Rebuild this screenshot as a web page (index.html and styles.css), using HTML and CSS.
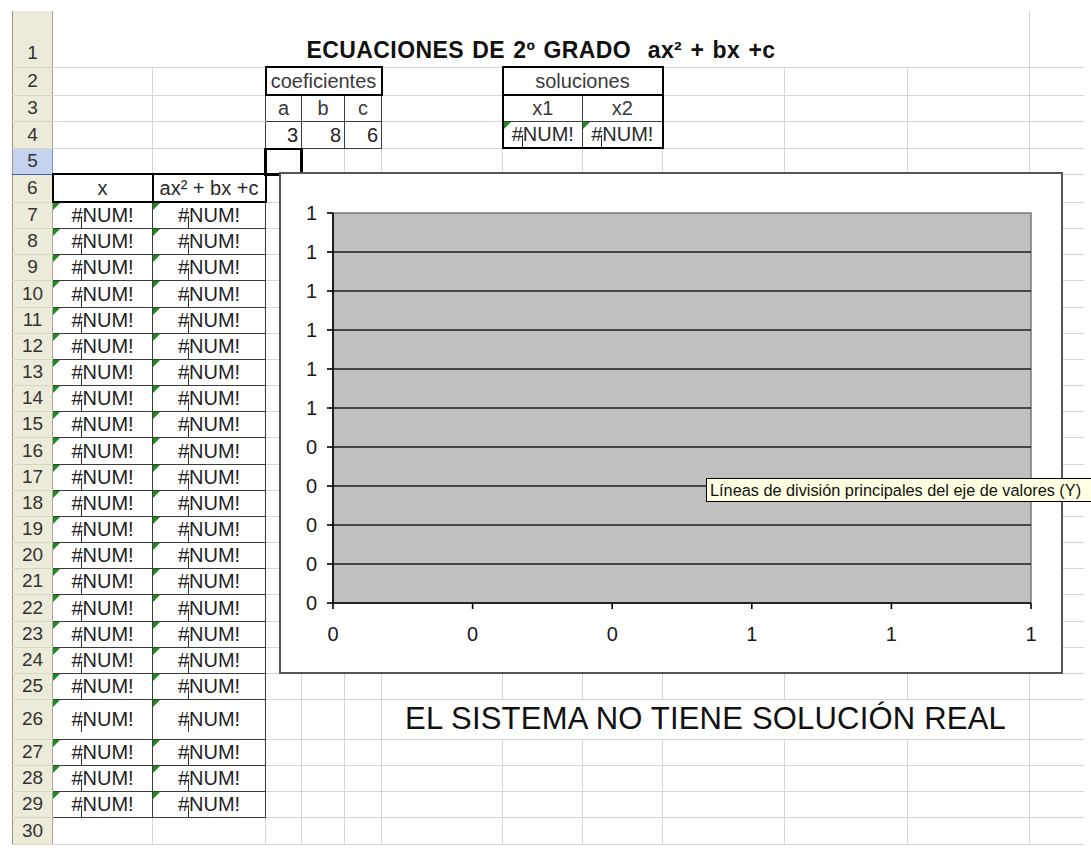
FILE: index.html
```html
<!DOCTYPE html>
<html lang="es">
<head>
<meta charset="utf-8">
<title>Ecuaciones de 2º grado</title>
<link rel="stylesheet" href="styles.css">
</head>
<body>
<div class="page">
<table class="sheet">
<colgroup>
<col class="c-hdr"><col class="c-a"><col class="c-b"><col class="c-c"><col class="c-d"><col class="c-e"><col class="c-f"><col class="c-g"><col class="c-h"><col class="c-i"><col class="c-j"><col class="c-k"><col class="c-l">
</colgroup>
<tbody>
<tr class="r1"><td class="rh">1</td><td colspan="11" class="title">ECUACIONES DE 2º GRADO&nbsp; ax² + bx +c</td><td></td></tr>
<tr class="h28"><td class="rh">2</td><td></td><td></td><td colspan="3" class="box2 ctr lbl">coeficientes</td><td></td><td colspan="2" class="box2 ctr lbl">soluciones</td><td></td><td></td><td></td><td></td></tr>
<tr><td class="rh">3</td><td></td><td class="rd"></td><td class="k ctr lbl">a</td><td class="k ctr lbl">b</td><td class="k ctr lbl">c</td><td></td><td class="k sl ctr lbl">x1</td><td class="k sr ctr lbl">x2</td><td></td><td></td><td></td><td></td></tr>
<tr class="h27"><td class="rh">4</td><td></td><td class="rd"></td><td class="k num">3</td><td class="k num">8</td><td class="k num">6</td><td></td><td class="k sl sb err ctr"><span class="h">#</span>NUM!</td><td class="k sr sb err ctr"><span class="h">#</span>NUM!</td><td></td><td></td><td></td><td></td></tr>
<tr><td class="rh sel">5</td><td></td><td></td><td class="selcell"><div class="selbox"></div></td><td></td><td></td><td></td><td></td><td></td><td></td><td></td><td></td><td></td></tr>
<tr class="h28"><td class="rh">6</td><td class="box2 ctr">x</td><td class="box2 ctr">ax² + bx +c</td><td></td><td></td><td></td><td></td><td></td><td></td><td></td><td></td><td></td><td></td></tr>
<tr><td class="rh">7</td><td class="d err"><span class="h">#</span>NUM!</td><td class="d err"><span class="h">#</span>NUM!</td><td></td><td></td><td></td><td></td><td></td><td></td><td></td><td></td><td></td><td></td></tr>
<tr><td class="rh">8</td><td class="d err"><span class="h">#</span>NUM!</td><td class="d err"><span class="h">#</span>NUM!</td><td></td><td></td><td></td><td></td><td></td><td></td><td></td><td></td><td></td><td></td></tr>
<tr><td class="rh">9</td><td class="d err"><span class="h">#</span>NUM!</td><td class="d err"><span class="h">#</span>NUM!</td><td></td><td></td><td></td><td></td><td></td><td></td><td></td><td></td><td></td><td></td></tr>
<tr class="h27"><td class="rh">10</td><td class="d err"><span class="h">#</span>NUM!</td><td class="d err"><span class="h">#</span>NUM!</td><td></td><td></td><td></td><td></td><td></td><td></td><td></td><td></td><td></td><td></td></tr>
<tr><td class="rh">11</td><td class="d err"><span class="h">#</span>NUM!</td><td class="d err"><span class="h">#</span>NUM!</td><td></td><td></td><td></td><td></td><td></td><td></td><td></td><td></td><td></td><td></td></tr>
<tr><td class="rh">12</td><td class="d err"><span class="h">#</span>NUM!</td><td class="d err"><span class="h">#</span>NUM!</td><td></td><td></td><td></td><td></td><td></td><td></td><td></td><td></td><td></td><td></td></tr>
<tr><td class="rh">13</td><td class="d err"><span class="h">#</span>NUM!</td><td class="d err"><span class="h">#</span>NUM!</td><td></td><td></td><td></td><td></td><td></td><td></td><td></td><td></td><td></td><td></td></tr>
<tr><td class="rh">14</td><td class="d err"><span class="h">#</span>NUM!</td><td class="d err"><span class="h">#</span>NUM!</td><td></td><td></td><td></td><td></td><td></td><td></td><td></td><td></td><td></td><td></td></tr>
<tr><td class="rh">15</td><td class="d err"><span class="h">#</span>NUM!</td><td class="d err"><span class="h">#</span>NUM!</td><td></td><td></td><td></td><td></td><td></td><td></td><td></td><td></td><td></td><td></td></tr>
<tr class="h27"><td class="rh">16</td><td class="d err"><span class="h">#</span>NUM!</td><td class="d err"><span class="h">#</span>NUM!</td><td></td><td></td><td></td><td></td><td></td><td></td><td></td><td></td><td></td><td></td></tr>
<tr><td class="rh">17</td><td class="d err"><span class="h">#</span>NUM!</td><td class="d err"><span class="h">#</span>NUM!</td><td></td><td></td><td></td><td></td><td></td><td></td><td></td><td></td><td></td><td></td></tr>
<tr><td class="rh">18</td><td class="d err"><span class="h">#</span>NUM!</td><td class="d err"><span class="h">#</span>NUM!</td><td></td><td></td><td></td><td></td><td></td><td></td><td></td><td></td><td></td><td></td></tr>
<tr><td class="rh">19</td><td class="d err"><span class="h">#</span>NUM!</td><td class="d err"><span class="h">#</span>NUM!</td><td></td><td></td><td></td><td></td><td></td><td></td><td></td><td></td><td></td><td></td></tr>
<tr><td class="rh">20</td><td class="d err"><span class="h">#</span>NUM!</td><td class="d err"><span class="h">#</span>NUM!</td><td></td><td></td><td></td><td></td><td></td><td></td><td></td><td></td><td></td><td></td></tr>
<tr><td class="rh">21</td><td class="d err"><span class="h">#</span>NUM!</td><td class="d err"><span class="h">#</span>NUM!</td><td></td><td></td><td></td><td></td><td></td><td></td><td></td><td></td><td></td><td></td></tr>
<tr class="h27"><td class="rh">22</td><td class="d err"><span class="h">#</span>NUM!</td><td class="d err"><span class="h">#</span>NUM!</td><td></td><td></td><td></td><td></td><td></td><td></td><td></td><td></td><td></td><td></td></tr>
<tr><td class="rh">23</td><td class="d err"><span class="h">#</span>NUM!</td><td class="d err"><span class="h">#</span>NUM!</td><td></td><td></td><td></td><td></td><td></td><td></td><td></td><td></td><td></td><td></td></tr>
<tr><td class="rh">24</td><td class="d err"><span class="h">#</span>NUM!</td><td class="d err"><span class="h">#</span>NUM!</td><td></td><td></td><td></td><td></td><td></td><td></td><td></td><td></td><td></td><td></td></tr>
<tr><td class="rh">25</td><td class="d err"><span class="h">#</span>NUM!</td><td class="d err"><span class="h">#</span>NUM!</td><td></td><td></td><td></td><td></td><td></td><td></td><td></td><td></td><td></td><td></td></tr>
<tr class="h40"><td class="rh">26</td><td class="d err"><span class="h">#</span>NUM!</td><td class="d err"><span class="h">#</span>NUM!</td><td></td><td></td><td></td><td colspan="6" class="msg">EL SISTEMA NO TIENE SOLUCIÓN REAL</td><td></td></tr>
<tr><td class="rh">27</td><td class="d err"><span class="h">#</span>NUM!</td><td class="d err"><span class="h">#</span>NUM!</td><td></td><td></td><td></td><td></td><td></td><td></td><td></td><td></td><td></td><td></td></tr>
<tr><td class="rh">28</td><td class="d err"><span class="h">#</span>NUM!</td><td class="d err"><span class="h">#</span>NUM!</td><td></td><td></td><td></td><td></td><td></td><td></td><td></td><td></td><td></td><td></td></tr>
<tr><td class="rh">29</td><td class="d err"><span class="h">#</span>NUM!</td><td class="d err"><span class="h">#</span>NUM!</td><td></td><td></td><td></td><td></td><td></td><td></td><td></td><td></td><td></td><td></td></tr>
<tr class="h27"><td class="rh">30</td><td></td><td></td><td></td><td></td><td></td><td></td><td></td><td></td><td></td><td></td><td></td><td></td></tr>
</tbody>
</table>

<div class="chart">
<svg width="780" height="498" viewBox="0 0 780 498" xmlns="http://www.w3.org/2000/svg">
<rect x="52" y="39" width="698" height="390" fill="#c0c0c0" stroke="#7a7a7a" stroke-width="1.5"/>
<g stroke="#1c1c1c" stroke-width="1.6">
<line x1="52" y1="78" x2="750" y2="78"/>
<line x1="52" y1="117" x2="750" y2="117"/>
<line x1="52" y1="156" x2="750" y2="156"/>
<line x1="52" y1="195" x2="750" y2="195"/>
<line x1="52" y1="234" x2="750" y2="234"/>
<line x1="52" y1="273" x2="750" y2="273"/>
<line x1="52" y1="312" x2="750" y2="312"/>
<line x1="52" y1="351" x2="750" y2="351"/>
<line x1="52" y1="390" x2="750" y2="390"/>
</g>
<g stroke="#000" stroke-width="1.6">
<line x1="52" y1="39" x2="52" y2="430"/>
<line x1="51" y1="429" x2="750" y2="429"/>
<line x1="46" y1="39" x2="52" y2="39"/>
<line x1="46" y1="78" x2="52" y2="78"/>
<line x1="46" y1="117" x2="52" y2="117"/>
<line x1="46" y1="156" x2="52" y2="156"/>
<line x1="46" y1="195" x2="52" y2="195"/>
<line x1="46" y1="234" x2="52" y2="234"/>
<line x1="46" y1="273" x2="52" y2="273"/>
<line x1="46" y1="312" x2="52" y2="312"/>
<line x1="46" y1="351" x2="52" y2="351"/>
<line x1="46" y1="390" x2="52" y2="390"/>
<line x1="46" y1="429" x2="52" y2="429"/>
<line x1="52" y1="429" x2="52" y2="435"/>
<line x1="191.6" y1="429" x2="191.6" y2="435"/>
<line x1="331.2" y1="429" x2="331.2" y2="435"/>
<line x1="470.8" y1="429" x2="470.8" y2="435"/>
<line x1="610.4" y1="429" x2="610.4" y2="435"/>
<line x1="750" y1="429" x2="750" y2="435"/>
</g>
<g class="ylab" text-anchor="end">
<text x="36" y="46">1</text>
<text x="36" y="85">1</text>
<text x="36" y="124">1</text>
<text x="36" y="163">1</text>
<text x="36" y="202">1</text>
<text x="36" y="241">1</text>
<text x="36" y="280">0</text>
<text x="36" y="319">0</text>
<text x="36" y="358">0</text>
<text x="36" y="397">0</text>
<text x="36" y="436">0</text>
</g>
<g class="xlab" text-anchor="middle">
<text x="52" y="467">0</text>
<text x="191.6" y="467">0</text>
<text x="331.2" y="467">0</text>
<text x="470.8" y="467">1</text>
<text x="610.4" y="467">1</text>
<text x="750" y="467">1</text>
</g>
</svg>
</div>

<div class="tip">Líneas de división principales del eje de valores (Y)</div>
</div>
</body>
</html>
```

FILE: styles.css
```css
html, body {
  margin: 0;
  padding: 0;
  background: #fff;
  overflow: hidden;
}

body {
  font-family: "Liberation Sans", Arial, sans-serif;
}

.page {
  position: relative;
  width: 1091px;
  height: 848px;
  box-sizing: border-box;
  padding: 11px 0 0 12px;
}

/* ---------- sheet grid ---------- */
.sheet {
  border-collapse: collapse;
  table-layout: fixed;
  width: 1071px;
  font-size: 20px;
  color: #2a2a2a;
}

.c-hdr { width: 40px; }
.c-a { width: 100px; }
.c-b { width: 113px; }
.c-c { width: 36px; }
.c-d { width: 43px; }
.c-e { width: 37px; }
.c-f { width: 121px; }
.c-g { width: 80px; }
.c-h { width: 80px; }
.c-i { width: 122px; }
.c-j { width: 123px; }
.c-k { width: 122px; }
.c-l { width: 54px; }

.sheet tr { height: 26px; }
.sheet tr.r1 { height: 56px; }
.sheet tr.h27 { height: 27px; }
.sheet tr.h28 { height: 28px; }
.sheet tr.h40 { height: 40px; }

.sheet td {
  border: 1px solid #d6d6d6;
  padding: 0 2px;
  line-height: 22px;
  white-space: nowrap;
  overflow: hidden;
  vertical-align: middle;
}

.sheet td:last-child { border-right: none; }
.sheet tr.r1 td { border-top: none; }

/* row headers */
.sheet td.rh {
  background: #ecead9;
  color: #333;
  text-align: center;
  font-size: 19px;
  padding: 0;
  border-left: 1px solid #9a978a;
  border-right: 1px solid #aca899;
  border-top: 1px solid #d9d5c3;
  border-bottom: 1px solid #d9d5c3;
}

.sheet tr.r1 td.rh {
  vertical-align: bottom;
  padding-bottom: 3px;
  border-top: none;
}

.sheet td.rh.sel {
  background: #c4d3ef;
  border-right: 1px solid #6b8fd6;
  border-bottom: 1px solid #3f5fa9;
}

/* title */
.sheet td.title {
  font-weight: bold;
  font-size: 23px;
  letter-spacing: 0.4px;
  word-spacing: 1.5px;
  text-align: center;
  vertical-align: bottom;
  padding-bottom: 3px;
  color: #111;
  line-height: 26px;
}

/* cell kinds */
.ctr { text-align: center; }
.sheet td.num { text-align: right; padding-right: 3px; color: #222; }
.lbl { color: #3a3a3a; }

.sheet td.box2 { border: 2px solid #000; }
.sheet td.k { border: 1px solid #3c3c3c; }
.sheet td.rd { border-right: 1px solid #3c3c3c; }
.sheet td.sl { border-left: 2px solid #000; }
.sheet td.sr { border-right: 2px solid #000; }
.sheet td.sb { border-bottom: 2px solid #000; }

.sheet td.d {
  border: 1px solid #3c3c3c;
  text-align: center;
  color: #222;
}

/* error indicator (green corner) */
.sheet td.err { position: relative; }
.sheet td.err::before {
  content: "";
  position: absolute;
  left: 0;
  top: 0;
  border-top: 7px solid #1d8a1d;
  border-right: 7px solid transparent;
}

.h { position: relative; }
.h::after {
  content: "";
  position: absolute;
  left: 10px;
  top: 12px;
  height: 12px;
  border-left: 1.5px solid #333;
}

/* active cell */
.sheet td.selcell {
  position: relative;
  overflow: visible;
}
.selbox {
  position: absolute;
  left: -2px;
  top: -1px;
  width: 39px;
  height: 28px;
  box-sizing: border-box;
  border: 3px solid #000;
  border-top-width: 2px;
}

/* message */
.sheet td.msg {
  font-size: 31px;
  letter-spacing: 0.2px;
  text-align: center;
  color: #111;
  line-height: 34px;
}

/* ---------- chart ---------- */
.chart {
  position: absolute;
  left: 279px;
  top: 172px;
  width: 784px;
  height: 502px;
  box-sizing: border-box;
  border: 2px solid #555;
  background: #fff;
}

.chart svg { display: block; }

.ylab text,
.xlab text {
  font-family: "Liberation Sans", Arial, sans-serif;
  font-size: 20px;
  fill: #1a1a1a;
}

/* ---------- tooltip ---------- */
.tip {
  position: absolute;
  left: 706px;
  top: 478px;
  width: 420px;
  height: 24px;
  box-sizing: border-box;
  padding: 0 3px;
  border: 1px solid #000;
  background: #ffffe1;
  font-size: 16.3px;
  line-height: 22px;
  color: #111;
  white-space: nowrap;
}
```
